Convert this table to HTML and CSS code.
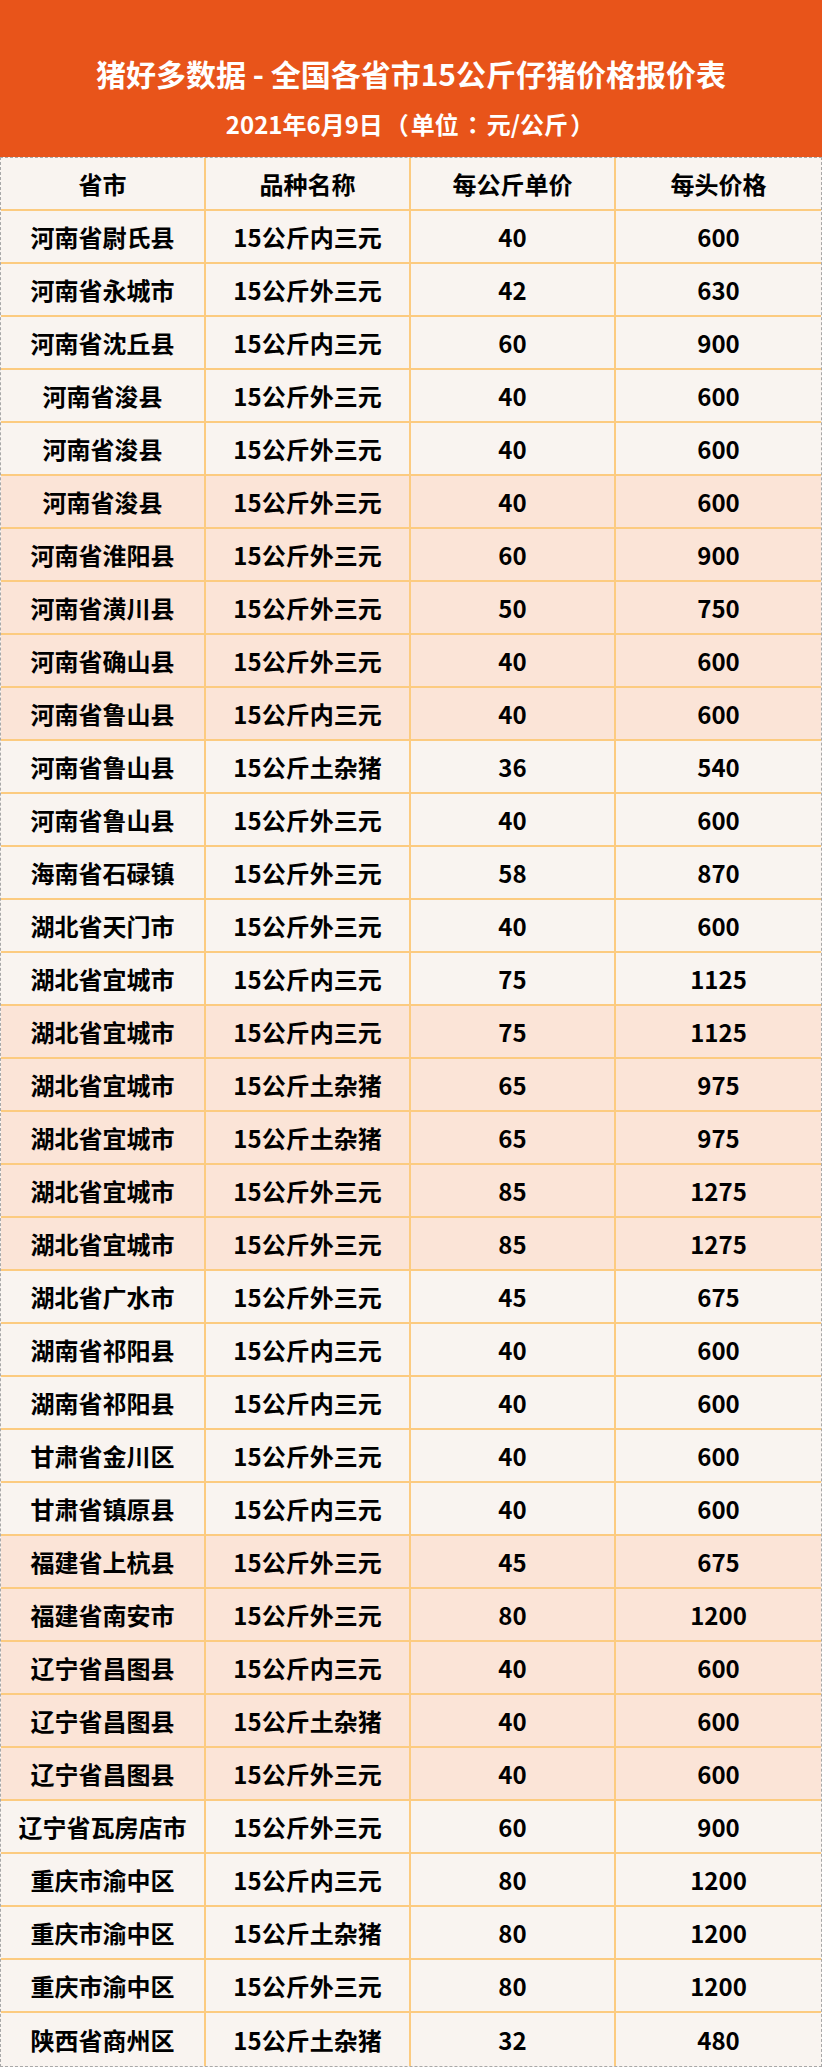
FILE: index.html
```html
<!DOCTYPE html>
<html lang="zh-CN">
<head>
<meta charset="utf-8">
<title>猪好多数据 - 全国各省市15公斤仔猪价格报价表</title>
<link rel="stylesheet" href="styles.css">
</head>
<body>
<div class="sheet">
  <header class="banner">
    <h1 class="title">猪好多数据 - 全国各省市15公斤仔猪价格报价表</h1>
    <p class="subtitle">2021年6月9日<span class="punct">（</span>单位<span class="punct">：</span>元/公斤<span class="punct">）</span></p>
  </header>
  <div class="table">
    <div class="row head"><div class="cell">省市</div><div class="cell">品种名称</div><div class="cell">每公斤单价</div><div class="cell">每头价格</div></div>
    <div class="row"><div class="cell">河南省尉氏县</div><div class="cell">15公斤内三元</div><div class="cell">40</div><div class="cell">600</div></div>
    <div class="row"><div class="cell">河南省永城市</div><div class="cell">15公斤外三元</div><div class="cell">42</div><div class="cell">630</div></div>
    <div class="row"><div class="cell">河南省沈丘县</div><div class="cell">15公斤内三元</div><div class="cell">60</div><div class="cell">900</div></div>
    <div class="row"><div class="cell">河南省浚县</div><div class="cell">15公斤外三元</div><div class="cell">40</div><div class="cell">600</div></div>
    <div class="row"><div class="cell">河南省浚县</div><div class="cell">15公斤外三元</div><div class="cell">40</div><div class="cell">600</div></div>
    <div class="row alt"><div class="cell">河南省浚县</div><div class="cell">15公斤外三元</div><div class="cell">40</div><div class="cell">600</div></div>
    <div class="row alt"><div class="cell">河南省淮阳县</div><div class="cell">15公斤外三元</div><div class="cell">60</div><div class="cell">900</div></div>
    <div class="row alt"><div class="cell">河南省潢川县</div><div class="cell">15公斤外三元</div><div class="cell">50</div><div class="cell">750</div></div>
    <div class="row alt"><div class="cell">河南省确山县</div><div class="cell">15公斤外三元</div><div class="cell">40</div><div class="cell">600</div></div>
    <div class="row alt"><div class="cell">河南省鲁山县</div><div class="cell">15公斤内三元</div><div class="cell">40</div><div class="cell">600</div></div>
    <div class="row"><div class="cell">河南省鲁山县</div><div class="cell">15公斤土杂猪</div><div class="cell">36</div><div class="cell">540</div></div>
    <div class="row"><div class="cell">河南省鲁山县</div><div class="cell">15公斤外三元</div><div class="cell">40</div><div class="cell">600</div></div>
    <div class="row"><div class="cell">海南省石碌镇</div><div class="cell">15公斤外三元</div><div class="cell">58</div><div class="cell">870</div></div>
    <div class="row"><div class="cell">湖北省天门市</div><div class="cell">15公斤外三元</div><div class="cell">40</div><div class="cell">600</div></div>
    <div class="row"><div class="cell">湖北省宜城市</div><div class="cell">15公斤内三元</div><div class="cell">75</div><div class="cell">1125</div></div>
    <div class="row alt"><div class="cell">湖北省宜城市</div><div class="cell">15公斤内三元</div><div class="cell">75</div><div class="cell">1125</div></div>
    <div class="row alt"><div class="cell">湖北省宜城市</div><div class="cell">15公斤土杂猪</div><div class="cell">65</div><div class="cell">975</div></div>
    <div class="row alt"><div class="cell">湖北省宜城市</div><div class="cell">15公斤土杂猪</div><div class="cell">65</div><div class="cell">975</div></div>
    <div class="row alt"><div class="cell">湖北省宜城市</div><div class="cell">15公斤外三元</div><div class="cell">85</div><div class="cell">1275</div></div>
    <div class="row alt"><div class="cell">湖北省宜城市</div><div class="cell">15公斤外三元</div><div class="cell">85</div><div class="cell">1275</div></div>
    <div class="row"><div class="cell">湖北省广水市</div><div class="cell">15公斤外三元</div><div class="cell">45</div><div class="cell">675</div></div>
    <div class="row"><div class="cell">湖南省祁阳县</div><div class="cell">15公斤内三元</div><div class="cell">40</div><div class="cell">600</div></div>
    <div class="row"><div class="cell">湖南省祁阳县</div><div class="cell">15公斤内三元</div><div class="cell">40</div><div class="cell">600</div></div>
    <div class="row"><div class="cell">甘肃省金川区</div><div class="cell">15公斤外三元</div><div class="cell">40</div><div class="cell">600</div></div>
    <div class="row"><div class="cell">甘肃省镇原县</div><div class="cell">15公斤内三元</div><div class="cell">40</div><div class="cell">600</div></div>
    <div class="row alt"><div class="cell">福建省上杭县</div><div class="cell">15公斤外三元</div><div class="cell">45</div><div class="cell">675</div></div>
    <div class="row alt"><div class="cell">福建省南安市</div><div class="cell">15公斤外三元</div><div class="cell">80</div><div class="cell">1200</div></div>
    <div class="row alt"><div class="cell">辽宁省昌图县</div><div class="cell">15公斤内三元</div><div class="cell">40</div><div class="cell">600</div></div>
    <div class="row alt"><div class="cell">辽宁省昌图县</div><div class="cell">15公斤土杂猪</div><div class="cell">40</div><div class="cell">600</div></div>
    <div class="row alt"><div class="cell">辽宁省昌图县</div><div class="cell">15公斤外三元</div><div class="cell">40</div><div class="cell">600</div></div>
    <div class="row"><div class="cell">辽宁省瓦房店市</div><div class="cell">15公斤外三元</div><div class="cell">60</div><div class="cell">900</div></div>
    <div class="row"><div class="cell">重庆市渝中区</div><div class="cell">15公斤内三元</div><div class="cell">80</div><div class="cell">1200</div></div>
    <div class="row"><div class="cell">重庆市渝中区</div><div class="cell">15公斤土杂猪</div><div class="cell">80</div><div class="cell">1200</div></div>
    <div class="row"><div class="cell">重庆市渝中区</div><div class="cell">15公斤外三元</div><div class="cell">80</div><div class="cell">1200</div></div>
    <div class="row last"><div class="cell">陕西省商州区</div><div class="cell">15公斤土杂猪</div><div class="cell">32</div><div class="cell">480</div></div>
  </div>
</div>
</body>
</html>
```

FILE: styles.css
```css
* { box-sizing: border-box; }

html, body {
  margin: 0;
  padding: 0;
  background: #ffffff;
}

body {
  font-family: "Noto Sans CJK SC", "Noto Sans", sans-serif;
  color: #000000;
}

.sheet {
  width: 822px;
}

.banner {
  height: 157px;
  background: #e8541a;
  color: #ffffff;
  display: flex;
  flex-direction: column;
  align-items: center;
  padding-top: 57px;
}

.title {
  margin: 0;
  font-size: 30px;
  line-height: 32px;
  font-weight: 700;
  letter-spacing: 0;
}

.subtitle {
  margin: 22px 0 0 0;
  font-size: 24px;
  line-height: 26px;
  font-weight: 700;
  display: flex;
  align-items: baseline;
}

.punct {
  display: inline-block;
  width: 28px;
  text-align: center;
  font-family: "Noto Sans CJK TC", "Noto Sans CJK SC", sans-serif;
}

.table {
  border: 1px dashed #a8a8a8;
  background: #f9f4f0;
}

.row {
  display: grid;
  grid-template-columns: 205px 205px 205px 1fr;
  height: 53px;
  border-bottom: 2px solid #fccb80;
  background: #f9f4f0;
}

.row.alt {
  background: #fbe4d7;
}

.row.last {
  border-bottom: none;
}

.cell {
  display: flex;
  align-items: center;
  justify-content: center;
  font-size: 24px;
  font-weight: 700;
  line-height: 1;
  white-space: nowrap;
  border-right: 2px solid #fccb80;
}

.cell:last-child {
  border-right: none;
}
```
